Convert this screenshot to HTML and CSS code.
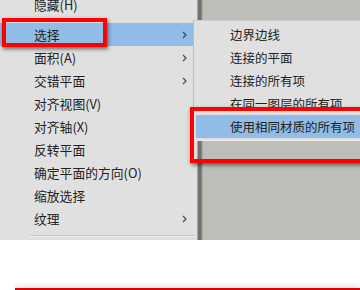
FILE: index.html
```html
<!DOCTYPE html>
<html lang="zh-CN">
<head>
    <meta charset="UTF-8">
    <title>选择菜单</title>
    <link rel="stylesheet" href="styles.css">
</head>
<body>
    <div class="screen">
        <div class="menu">
            <div class="item first">隐藏(H)</div>
            <div class="item active">选择<svg class="chev" width="5" height="8" viewBox="0 0 5 8"><path d="M1 1l3 3-3 3" /></svg></div>
            <div class="item">面积(A)<svg class="chev" width="5" height="8" viewBox="0 0 5 8"><path d="M1 1l3 3-3 3" /></svg></div>
            <div class="item">交错平面<svg class="chev" width="5" height="8" viewBox="0 0 5 8"><path d="M1 1l3 3-3 3" /></svg></div>
            <div class="item">对齐视图(V)</div>
            <div class="item">对齐轴(X)</div>
            <div class="item">反转平面</div>
            <div class="item">确定平面的方向(O)</div>
            <div class="item">缩放选择</div>
            <div class="item">纹理<svg class="chev" width="5" height="8" viewBox="0 0 5 8"><path d="M1 1l3 3-3 3" /></svg></div>
            <div class="sep"></div>
        </div>
        <div class="canvas"></div>

        <div class="submenu">
            <div class="item">边界边线</div>
            <div class="item">连接的平面</div>
            <div class="item">连接的所有项</div>
            <div class="item">在同一图层的所有项</div>
            <div class="item active">使用相同材质的所有项</div>
        </div>

        <div class="mark mark-select"></div>
        <div class="mark mark-material"></div>
    </div>
    <div class="below">
        <div class="next-box"></div>
    </div>
</body>
</html>
```

FILE: styles.css
```css
body {
    margin: 0;
    width: 360px;
    height: 290px;
    overflow: hidden;
    background: #fff;
    font-family: "Noto Sans CJK SC", "Microsoft YaHei", sans-serif;
    font-size: 12.8px;
    color: #222;
}
.screen {
    position: relative;
    display: flex;
    height: 240px;
    overflow: hidden;
}
.menu {
    width: 197px;
    background: #e0e0e0;
    flex-shrink: 0;
}
.item {
    height: 23px;
    line-height: 23px;
    padding: 0 8px 0 34px;
    margin-right: 2px;
    display: flex;
    align-items: center;
    justify-content: space-between;
    white-space: nowrap;
}
.item.first {
    margin-top: -7px;
    margin-bottom: 7px;
}
.item.active {
    background: #90bce6;
}
.chev path {
    fill: none;
    stroke: #444;
    stroke-width: 1.1;
}
.sep {
    margin: 5px 2px 0 30px;
    border-top: 1px solid #c6c6c6;
    border-bottom: 1px solid #ececec;
}
.canvas {
    flex: 1;
    background: linear-gradient(to right, #a8a8a6 0, #a8a8a6 1px, #727270 1px, #727270 4px, #9a9a97 5px, #bebdb8 6px);
}
.submenu {
    position: absolute;
    left: 193px;
    top: 20px;
    width: 180px;
    background: #e0e0e0;
    border-left: 1px solid #bdbdbd;
    border-top: 1px solid #cfcfcf;
    padding: 2px 0 2px 0;
    border-bottom: 1px solid #eaeaea;
    font-size: 12.5px;
}
.submenu .item {
    padding-left: 34px;
    margin-left: 2px;
    margin-right: 3px;
}
.mark {
    position: absolute;
    border: 4px solid #ff0000;
    box-shadow: 1px 2px 4px rgba(0, 0, 0, 0.55);
}
.mark-select {
    left: 2px;
    top: 18px;
    width: 97px;
    height: 21px;
}
.mark-material {
    left: 190px;
    top: 107px;
    width: 180px;
    height: 48px;
}
.below {
    height: 50px;
    display: flex;
    flex-direction: column;
    justify-content: flex-end;
}
.next-box {
    margin-left: 15px;
    height: 0;
    border-top: 2px solid #e00000;
    box-shadow: 0 -2px 4px rgba(0, 0, 0, 0.2);
}
```
